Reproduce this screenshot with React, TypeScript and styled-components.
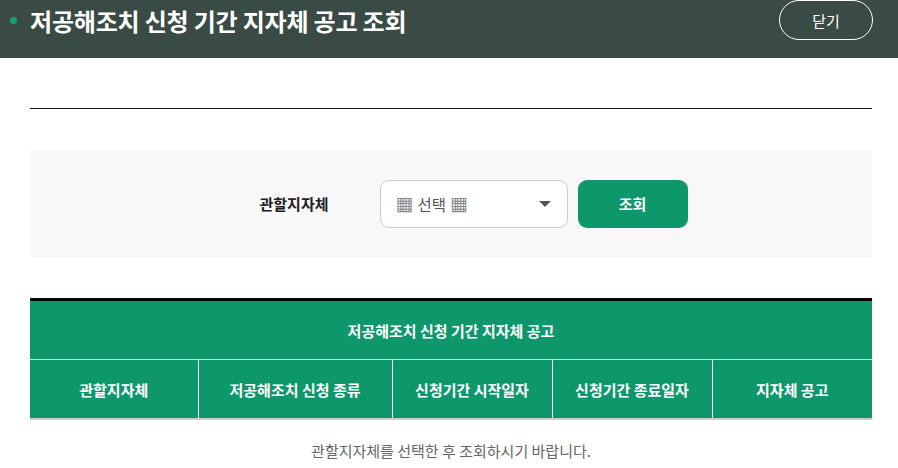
import * as React from 'react';
import styled, { createGlobalStyle } from 'styled-components';

const GlobalStyle = createGlobalStyle`
  html, body {
    margin: 0;
    padding: 0;
    background: #fff;
    font-family: "Noto Sans CJK KR", "Noto Sans", sans-serif;
  }
`;

const Page = styled.div`
  width: 898px;
  height: 468px;
  overflow: hidden;
`;

const TopBar = styled.header`
  height: 58px;
  background: #3a4a44;
  display: flex;
  align-items: center;
  justify-content: space-between;
  padding: 0 25px 0 10px;
  box-sizing: border-box;
`;

const Title = styled.h1`
  margin: 0;
  display: flex;
  align-items: center;
  gap: 13px;
  color: #fff;
  font-size: 24px;
  font-weight: 700;
  letter-spacing: -0.2px;
  margin-top: -17px;
  &::before {
    content: '';
    width: 7px;
    height: 7px;
    border-radius: 50%;
    background: #12a372;
  }
`;

const CloseButton = styled.button`
  width: 94px;
  height: 40px;
  margin-top: -18px;
  border: 1px solid #fff;
  border-radius: 20px;
  background: transparent;
  color: #fff;
  font-family: inherit;
  font-size: 15px;
`;

const Content = styled.main`
  padding: 50px 26px 0 30px;
`;

const Divider = styled.hr`
  margin: 0;
  border: 0;
  border-top: 1px solid #111;
`;

const SearchBox = styled.section`
  margin-top: 41px;
  height: 107px;
  background: #f8f8f8;
  display: flex;
  align-items: center;
  justify-content: center;
  padding-left: 45px;
`;

const Label = styled.label`
  font-size: 15px;
  font-weight: 700;
  color: #222;
  margin-right: 51px;
`;

const SelectBox = styled.div`
  width: 188px;
  height: 48px;
  box-sizing: border-box;
  border: 1px solid #ccc;
  border-radius: 9px;
  background: #fff;
  display: flex;
  align-items: center;
  justify-content: space-between;
  padding: 0 16px 0 15px;
  font-size: 15.5px;
  color: #555;
`;

const Placeholder = styled.span`
  display: flex;
  align-items: center;
  gap: 4px;
`;

const Pattern = styled.span`
  color: #8a8a8a;
  font-family: "DejaVu Sans", sans-serif;
  font-size: 19px;
  line-height: 1;
`;

const Caret = styled.span`
  width: 0;
  height: 0;
  border-left: 6px solid transparent;
  border-right: 6px solid transparent;
  border-top: 6px solid #555;
`;

const SearchButton = styled.button`
  width: 110px;
  height: 48px;
  margin-left: 10px;
  border: 0;
  border-radius: 9px;
  background: #0e976b;
  color: #fff;
  font-family: inherit;
  font-size: 15px;
  font-weight: 700;
`;

const Table = styled.table`
  margin-top: 41px;
  width: 100%;
  border-collapse: collapse;
  table-layout: fixed;
  border-top: 3px solid #000;
  border-bottom: 2px solid #ccc;
`;

const HeadCell = styled.th<{ $first?: boolean }>`
  height: 58px;
  padding: 0;
  background: #0e976b;
  color: #fff;
  font-size: 15px;
  font-weight: 700;
  text-align: center;
  border-left: 1px solid #fff;
  border-top: ${p => (p.$first ? '0' : '1px solid #c8e0d6')};
  &:first-child {
    border-left: 0;
  }
`;

const Message = styled.p`
  margin: 20px 0 0;
  text-align: center;
  font-size: 15px;
  color: #666;
`;

const columns = [
  { label: '관할지자체', w: 168 },
  { label: '저공해조치 신청 종류', w: 194 },
  { label: '신청기간 시작일자', w: 160 },
  { label: '신청기간 종료일자', w: 160 },
  { label: '지자체 공고', w: 160 },
];

export default function App() {
  return (
    <Page>
      <GlobalStyle />
      <TopBar>
        <Title>저공해조치 신청 기간 지자체 공고 조회</Title>
        <CloseButton>닫기</CloseButton>
      </TopBar>
      <Content>
        <Divider />
        <SearchBox>
          <Label>관할지자체</Label>
          <SelectBox>
            <Placeholder>
              <Pattern>▦</Pattern>선택<Pattern>▦</Pattern>
            </Placeholder>
            <Caret />
          </SelectBox>
          <SearchButton>조회</SearchButton>
        </SearchBox>
        <Table>
          <colgroup>
            {columns.map(c => (
              <col key={c.label} style={{ width: c.w }} />
            ))}
          </colgroup>
          <thead>
            <tr>
              <HeadCell colSpan={5} $first>
                저공해조치 신청 기간 지자체 공고
              </HeadCell>
            </tr>
            <tr>
              {columns.map(c => (
                <HeadCell key={c.label}>{c.label}</HeadCell>
              ))}
            </tr>
          </thead>
        </Table>
        <Message>관할지자체를 선택한 후 조회하시기 바랍니다.</Message>
      </Content>
    </Page>
  );
}
